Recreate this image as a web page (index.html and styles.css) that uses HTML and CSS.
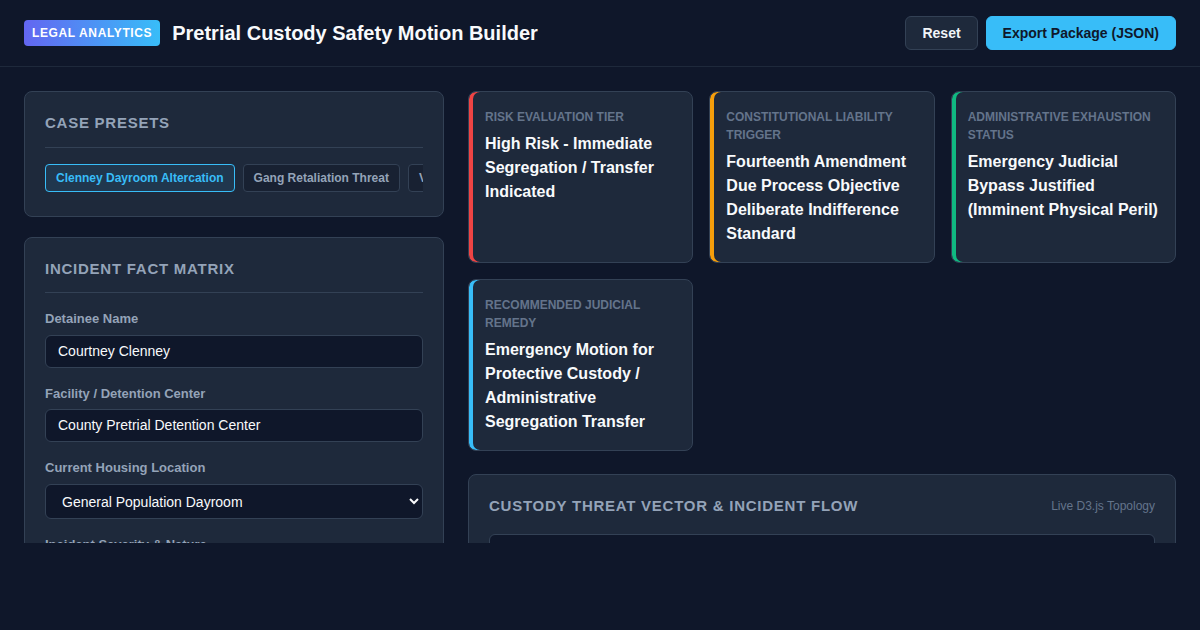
FILE: index.html
```html
<!DOCTYPE html>
<html lang="en">
<head>
<meta charset="utf-8">
<title>Pretrial Custody Safety Motion Builder</title>
<link rel="stylesheet" href="styles.css">
</head>
<body>
<div class="app">
  <header class="topbar">
    <div class="brand">
      <span class="badge">LEGAL ANALYTICS</span>
      <h1 class="title">Pretrial Custody Safety Motion Builder</h1>
    </div>
    <div class="actions">
      <button class="btn btn-ghost">Reset</button>
      <button class="btn btn-primary">Export Package (JSON)</button>
    </div>
  </header>

  <main class="layout">
    <aside class="sidebar">
      <section class="panel">
        <h2 class="panel-title ruled">Case Presets</h2>
        <div class="presets">
          <button class="preset active">Clenney Dayroom Altercation</button>
          <button class="preset">Gang Retaliation Threat</button>
          <button class="preset">Vulnerable Detainee Protection</button>
        </div>
      </section>

      <section class="panel">
        <h2 class="panel-title ruled">Incident Fact Matrix</h2>
        <div class="field">
          <label class="field-label">Detainee Name</label>
          <input class="control" type="text" value="Courtney Clenney">
        </div>
        <div class="field">
          <label class="field-label">Facility / Detention Center</label>
          <input class="control" type="text" value="County Pretrial Detention Center">
        </div>
        <div class="field">
          <label class="field-label">Current Housing Location</label>
          <select class="control select">
            <option>General Population Dayroom</option>
            <option>Protective Custody Unit</option>
            <option>Administrative Segregation</option>
          </select>
        </div>
        <div class="field">
          <label class="field-label">Incident Severity &amp; Nature</label>
          <select class="control select">
            <option>Physical Assault with Injury</option>
          </select>
        </div>
      </section>
    </aside>

    <section class="content">
      <div class="metrics">
        <div class="metric metric-red">
          <div class="metric-label">Risk Evaluation Tier</div>
          <div class="metric-value">High Risk - Immediate Segregation / Transfer Indicated</div>
        </div>
        <div class="metric metric-amber">
          <div class="metric-label">Constitutional Liability Trigger</div>
          <div class="metric-value">Fourteenth Amendment Due Process Objective Deliberate Indifference Standard</div>
        </div>
        <div class="metric metric-green">
          <div class="metric-label">Administrative Exhaustion Status</div>
          <div class="metric-value">Emergency Judicial Bypass Justified (Imminent Physical Peril)</div>
        </div>
        <div class="metric metric-blue">
          <div class="metric-label">Recommended Judicial Remedy</div>
          <div class="metric-value">Emergency Motion for Protective Custody / Administrative Segregation Transfer</div>
        </div>
      </div>

      <section class="panel graph-panel">
        <div class="graph-head">
          <h2 class="panel-title">Custody Threat Vector &amp; Incident Flow</h2>
          <span class="graph-note">Live D3.js Topology</span>
        </div>
        <div class="graph-canvas"></div>
      </section>
    </section>
  </main>
</div>
</body>
</html>
```

FILE: styles.css
```css
* { box-sizing: border-box; }

html, body {
  margin: 0;
  padding: 0;
  background: #0f172a;
}

body {
  font-family: "Liberation Sans", Arial, sans-serif;
  color: #f8fafc;
  line-height: 1.5;
}

.app {
  height: 543px;
  overflow: hidden;
}

/* Header */
.topbar {
  display: flex;
  align-items: center;
  justify-content: space-between;
  padding: 16px 24px;
  border-bottom: 1px solid #1e293b;
  background: #0f172a;
}

.brand {
  display: flex;
  align-items: center;
  gap: 12px;
}

.badge {
  display: inline-block;
  padding: 6px 8px;
  font-size: 12px;
  line-height: 14px;
  font-weight: 700;
  letter-spacing: 0.62px;
  color: #ffffff;
  border-radius: 4px;
  background: linear-gradient(90deg, #6366f1 0%, #38bdf8 100%);
}

.title {
  margin: 0;
  font-size: 20px;
  line-height: 24px;
  font-weight: 700;
  color: #f8fafc;
}

.actions {
  display: flex;
  gap: 8px;
}

.btn {
  font-family: inherit;
  font-size: 14px;
  line-height: 16px;
  font-weight: 700;
  padding: 8px 16px;
  border-radius: 6px;
  border: 1px solid #334155;
  cursor: pointer;
}

.btn-ghost {
  background: #1e293b;
  color: #f1f5f9;
}

.btn-primary {
  background: #38bdf8;
  border-color: #38bdf8;
  color: #0f172a;
}

/* Layout */
.layout {
  display: grid;
  grid-template-columns: 420px 1fr;
  gap: 24px;
  padding: 24px;
  align-items: start;
}

.sidebar {
  display: flex;
  flex-direction: column;
  gap: 20px;
}

.panel {
  background: #1e293b;
  border: 1px solid #334155;
  border-radius: 8px;
  padding: 20px;
}

.panel-title {
  margin: 0;
  font-size: 15px;
  line-height: 22.5px;
  font-weight: 700;
  letter-spacing: 0.05em;
  text-transform: uppercase;
  color: #94a3b8;
}

.panel-title.ruled {
  padding-bottom: 12px;
  border-bottom: 1px solid #334155;
  margin-bottom: 16px;
}

/* Presets */
.presets {
  display: flex;
  gap: 8px;
  overflow: hidden;
  padding-bottom: 4px;
}

.preset {
  flex: none;
  font-family: inherit;
  font-size: 12px;
  line-height: 14px;
  font-weight: 700;
  padding: 6px 10px;
  border-radius: 4px;
  border: 1px solid #334155;
  background: #182132;
  color: #94a3b8;
  white-space: nowrap;
  cursor: pointer;
}

.preset.active {
  border-color: #38bdf8;
  color: #38bdf8;
  background: rgba(56, 189, 248, 0.1);
}

/* Form */
.field {
  display: flex;
  flex-direction: column;
  margin-bottom: 16px;
}

.field-label {
  font-size: 13px;
  line-height: 19.5px;
  font-weight: 700;
  color: #94a3b8;
  margin-bottom: 6px;
}

.control {
  font-family: inherit;
  font-size: 14px;
  line-height: 15px;
  width: 100%;
  padding: 8px 12px;
  background: #0f172a;
  border: 1px solid #334155;
  border-radius: 6px;
  color: #f8fafc;
}

.select {
  height: 35px;
  color-scheme: dark;
}

/* Metrics */
.content {
  display: flex;
  flex-direction: column;
  gap: 23px;
}

.metrics {
  display: grid;
  grid-template-columns: repeat(3, 1fr);
  gap: 16px;
}

.metric {
  background: #1e293b;
  border: 1px solid #334155;
  border-radius: 8px;
  padding: 16px;
}

.metric-red { box-shadow: inset 4px 0 0 #ef4444; }
.metric-amber { box-shadow: inset 4px 0 0 #f59e0b; }
.metric-green { box-shadow: inset 4px 0 0 #10b981; }
.metric-blue { box-shadow: inset 4px 0 0 #38bdf8; }

.metric-label {
  font-size: 12px;
  line-height: 18px;
  font-weight: 700;
  text-transform: uppercase;
  color: #64748b;
  margin-bottom: 6px;
}

.metric-value {
  font-size: 16px;
  line-height: 24px;
  font-weight: 700;
  color: #f8fafc;
}

/* Graph */
.graph-head {
  display: flex;
  align-items: center;
  justify-content: space-between;
  margin-bottom: 16px;
}

.graph-note {
  font-size: 12px;
  color: #64748b;
}

.graph-canvas {
  height: 400px;
  background: #0f172a;
  border: 1px solid #334155;
  border-radius: 6px;
}
```
